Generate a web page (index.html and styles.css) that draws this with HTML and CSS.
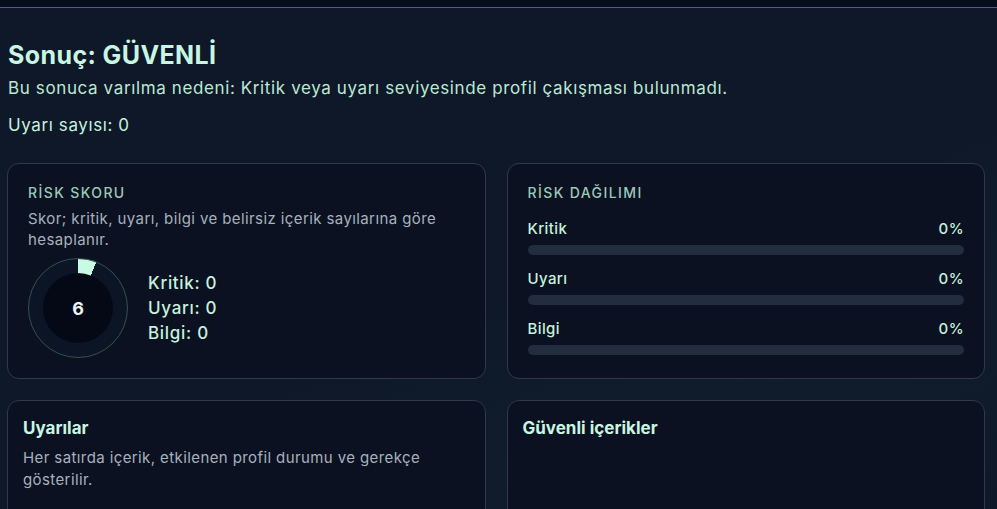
FILE: index.html
```html
<!DOCTYPE html>
<html lang="tr">
<head>
<meta charset="utf-8">
<title>Sonuç</title>
<link rel="stylesheet" href="styles.css">
</head>
<body>
<div class="topbar"></div>
<main class="page">
  <section class="summary">
    <h1 class="title">Sonuç: GÜVENLİ</h1>
    <p class="reason">Bu sonuca varılma nedeni: Kritik veya uyarı seviyesinde profil çakışması bulunmadı.</p>
    <p class="count">Uyarı sayısı: 0</p>
  </section>

  <section class="grid">
    <div class="card card-stat">
      <div class="eyebrow">RİSK SKORU</div>
      <p class="muted">Skor; kritik, uyarı, bilgi ve belirsiz içerik sayılarına göre hesaplanır.</p>
      <div class="score-row">
        <div class="donut" style="--p: 6%">
          <div class="donut-hole">6</div>
        </div>
        <ul class="legend">
          <li>Kritik: 0</li>
          <li>Uyarı: 0</li>
          <li>Bilgi: 0</li>
        </ul>
      </div>
    </div>

    <div class="card card-stat">
      <div class="eyebrow">RİSK DAĞILIMI</div>
      <div class="dist">
        <div class="dist-row">
          <div class="dist-head"><span>Kritik</span><span>0%</span></div>
          <div class="bar"><div class="bar-fill" style="width: 0%"></div></div>
        </div>
        <div class="dist-row">
          <div class="dist-head"><span>Uyarı</span><span>0%</span></div>
          <div class="bar"><div class="bar-fill" style="width: 0%"></div></div>
        </div>
        <div class="dist-row">
          <div class="dist-head"><span>Bilgi</span><span>0%</span></div>
          <div class="bar"><div class="bar-fill" style="width: 0%"></div></div>
        </div>
      </div>
    </div>

    <div class="card card-list">
      <h2 class="card-title">Uyarılar</h2>
      <p class="muted list-desc">Her satırda içerik, etkilenen profil durumu ve gerekçe gösterilir.</p>
    </div>

    <div class="card card-list">
      <h2 class="card-title">Güvenli içerikler</h2>
    </div>
  </section>
</main>
</body>
</html>
```

FILE: styles.css
```css
* { box-sizing: border-box; }

html, body {
  margin: 0;
  padding: 0;
}

body {
  background: #0e1828;
  font-family: "Inter", "Noto Sans", sans-serif;
  color: #c6f2df;
  height: 509px;
  overflow: hidden;
}

.topbar {
  height: 8px;
  background: #070d1b;
  border-bottom: 1px solid #1b7a8e;
}

.page {
  height: 501px;
  padding: 0 12px 0 7px;
  background: linear-gradient(160deg, #0e1828 0%, #0e1828 55%, #101c2c 75%, #0e1828 100%);
}

.summary {
  padding: 32px 0 27px 1px;
}

.title {
  margin: 0;
  font-size: 25px;
  line-height: 30px;
  font-weight: 700;
  color: #c9f6e2;
  letter-spacing: 0.4px;
}

.reason {
  margin: 7px 0 0;
  font-size: 17px;
  line-height: 22px;
  color: #bde7d5;
  letter-spacing: 0.62px;
}

.count {
  margin: 15px 0 0;
  font-size: 17px;
  line-height: 22px;
  color: #c6f2df;
  letter-spacing: 0.6px;
}

.grid {
  display: grid;
  grid-template-columns: 1fr 1fr;
  column-gap: 21px;
  row-gap: 21px;
}

.card {
  background: #0b1121;
  border: 1px solid #2c3a4a;
  border-radius: 12px;
}

.card-stat {
  height: 216px;
  padding: 20px 20px;
}

.eyebrow {
  font-size: 14px;
  line-height: 18px;
  letter-spacing: 1.4px;
  color: #9ccab8;
  font-weight: 500;
}

.muted {
  margin: 6px 0 0;
  font-size: 15px;
  line-height: 21px;
  color: #a7b1bd;
  letter-spacing: 0.4px;
}

.score-row {
  display: flex;
  align-items: center;
  gap: 20px;
  margin-top: 8px;
}

.donut {
  width: 100px;
  height: 100px;
  border-radius: 50%;
  background: conic-gradient(#c8fae4 0 var(--p), #0c1525 var(--p) 100%);
  border: 1px solid #33514d;
  display: flex;
  align-items: center;
  justify-content: center;
  flex: none;
}

.donut-hole {
  width: 70px;
  height: 70px;
  border-radius: 50%;
  background: #040915;
  display: flex;
  align-items: center;
  justify-content: center;
  font-size: 18px;
  font-weight: 700;
  color: #eef3f7;
}

.legend {
  list-style: none;
  margin: 0;
  padding: 0;
  font-size: 17px;
  line-height: 25px;
  color: #c6f2df;
  letter-spacing: 0.7px;
  font-weight: 500;
}

.dist {
  margin-top: 17px;
  display: flex;
  flex-direction: column;
  gap: 14px;
}

.dist-head {
  display: flex;
  justify-content: space-between;
  font-size: 15px;
  line-height: 20px;
  color: #c6f2df;
  font-weight: 500;
  letter-spacing: 0.4px;
}

.bar {
  margin-top: 6px;
  height: 10px;
  border-radius: 5px;
  background: #222d3f;
  overflow: hidden;
}

.bar-fill {
  height: 100%;
  background: #c8fae4;
}

.card-list {
  height: 110px;
  padding: 16px 15px;
  border-bottom-left-radius: 0;
  border-bottom-right-radius: 0;
}

.card-title {
  margin: 0;
  font-size: 17px;
  line-height: 22px;
  font-weight: 700;
  color: #c9f6e2;
}

.list-desc {
  margin-top: 8px;
  line-height: 22px;
}
```
